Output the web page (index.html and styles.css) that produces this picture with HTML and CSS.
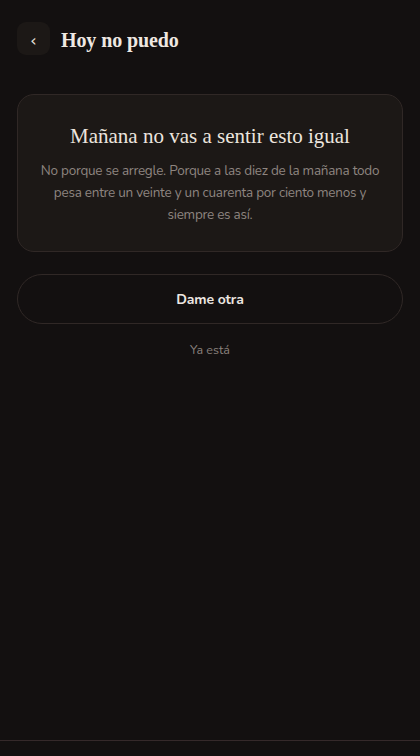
FILE: index.html
```html
<!DOCTYPE html>
<html lang="es">
<head>
<meta charset="utf-8">
<meta name="viewport" content="width=device-width, initial-scale=1">
<link rel="stylesheet" href="styles.css">
<title>Hoy no puedo</title>
</head>
<body>
<div class="app">
  <header class="topbar">
    <button class="back" aria-label="Volver">‹</button>
    <h1 class="title">Hoy no puedo</h1>
  </header>
  <main class="content">
    <section class="card">
      <h2 class="card-title">Mañana no vas a sentir esto igual</h2>
      <p class="card-text">No porque se arregle. Porque a las diez de la mañana todo pesa entre un veinte y un cuarenta por ciento menos y siempre es así.</p>
    </section>
    <button class="primary">Dame otra</button>
    <button class="link">Ya está</button>
  </main>
  <footer class="bottombar"></footer>
</div>
</body>
</html>
```
FILE: styles.css
```css
* { box-sizing: border-box; }
html, body { margin: 0; padding: 0; height: 100%; }
body {
  background: #131010;
  color: #ece6e1;
  font-family: "Nunito", "Lato", "Noto Sans", sans-serif;
}
.app {
  min-height: 100vh;
  display: flex;
  flex-direction: column;
}
.topbar {
  display: flex;
  align-items: center;
  gap: 11px;
  padding: 22px 17px 0;
}
.back {
  width: 33px;
  height: 33px;
  border: none;
  border-radius: 9px;
  background: #1c1816;
  color: #e8e0da;
  font-family: "DejaVu Sans", sans-serif;
  font-size: 16px;
  line-height: 1;
  padding: 4px 0 0;
  display: flex;
  align-items: center;
  justify-content: center;
}
.title {
  margin: 0;
  font-family: "Liberation Serif", serif;
  font-weight: 700;
  font-size: 20px;
  color: #efe8e2;
  letter-spacing: -0.1px;
  padding-top: 4px;
}
.content {
  flex: 1;
  display: flex;
  flex-direction: column;
  padding: 39px 17px 0;
}
.card {
  background: #1c1816;
  border: 1px solid #302826;
  border-radius: 17px;
  padding: 26px 16px 25px;
  text-align: center;
}
.card-title {
  margin: 0 0 9px;
  font-family: "Liberation Serif", serif;
  font-weight: 400;
  font-size: 21px;
  line-height: 30px;
  color: #ece5df;
}
.card-text {
  margin: 0;
  font-size: 13.5px;
  letter-spacing: -0.25px;
  line-height: 22px;
  color: #8e8580;
}
.primary {
  margin-top: 22px;
  height: 50px;
  border: 1px solid #302826;
  border-radius: 25px;
  background: transparent;
  color: #ece6e1;
  font-family: inherit;
  font-weight: 700;
  font-size: 14px;
  letter-spacing: -0.1px;
}
.link {
  margin-top: 15px;
  align-self: center;
  border: none;
  background: transparent;
  color: #8a817c;
  font-family: inherit;
  font-size: 12.5px;
  padding: 2px 4px;
}
.bottombar {
  height: 16px;
  border-top: 1px solid #35292a;
}
```
